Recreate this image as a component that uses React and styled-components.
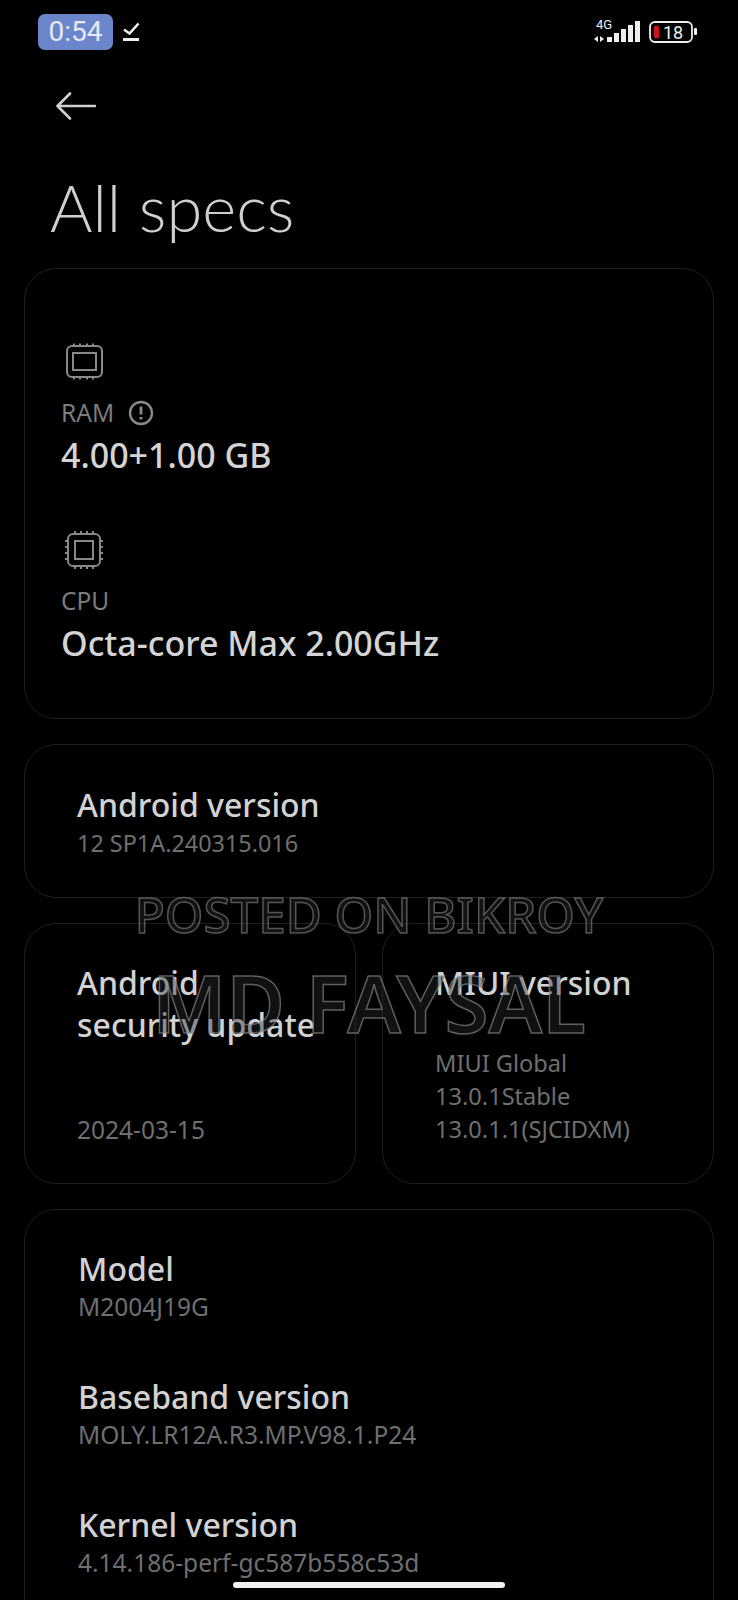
import React from "react";
import styled, { createGlobalStyle } from "styled-components";

const Global = createGlobalStyle`
  html, body { margin: 0; background: #000; }
  body { font-family: "Noto Sans", "Liberation Sans", sans-serif; }
`;

const Screen = styled.div`
  position: relative;
  width: 738px;
  height: 1600px;
  overflow: hidden;
  background: #000;
  color: #dcdcdc;
`;

const StatusBar = styled.div`
  display: flex;
  align-items: center;
  justify-content: space-between;
  height: 36px;
  padding: 14px 40px 0 38px;
`;

const StatusLeft = styled.div`
  display: flex;
  align-items: center;
  gap: 9px;
`;

const Clock = styled.div`
  width: 75px;
  height: 36px;
  border-radius: 7px;
  background: #6b86cb;
  color: #e6eaf5;
  font-family: Roboto, sans-serif;
  font-size: 28px;
  line-height: 36px;
  text-align: center;
`;

const StatusRight = styled.div`
  display: flex;
  align-items: center;
  gap: 9px;
`;

const BackRow = styled.div`
  height: 40px;
  margin-top: 36px;
  padding-left: 56px;
  display: flex;
  align-items: center;
`;

const Title = styled.h1`
  margin: 45px 0 0 50px;
  height: 73px;
  font-family: Lato, sans-serif;
  font-weight: 300;
  font-size: 65px;
  line-height: 73px;
  color: #cfcfcf;
`;

const Content = styled.div`
  display: flex;
  flex-direction: column;
  gap: 25px;
  margin-top: 24px;
  padding: 0 24px;
`;

const Card = styled.section`
  box-sizing: border-box;
  border: 1px solid #1f1f1f;
  border-radius: 32px;
  height: ${(p) => p.$height}px;
  padding: ${(p) => p.$padding || "0"};
`;

const Pair = styled.div`
  display: grid;
  grid-template-columns: 332px 332px;
  gap: 26px;
`;

const SpecIcon = styled.svg`
  display: block;
  width: 40px;
  height: 40px;
  margin-left: 39px;
`;

const SpecLabel = styled.div`
  display: flex;
  align-items: center;
  gap: 14px;
  margin: 16px 0 0 36px;
  height: 30px;
  font-size: 24.5px;
  line-height: 30px;
  color: #7c7c7c;
`;

const SpecValue = styled.div`
  margin: 5px 0 0 36px;
  font-size: 34px;
  line-height: 44px;
  font-weight: 500;
  color: #d4d4d4;
`;

const Spec = styled.div`
  margin-bottom: ${(p) => p.$gap}px;
`;

const Name = styled.div`
  font-size: 32px;
  line-height: 42px;
  font-weight: 500;
  color: #d2d2d2;
`;

const Detail = styled.div`
  margin-top: ${(p) => p.$top || 0}px;
  font-size: ${(p) => p.$size || 24.5}px;
  line-height: 33px;
  color: #6f6f6f;
`;

const Item = styled.div`
  margin-bottom: 53px;
`;

const Watermark = styled.div`
  position: absolute;
  left: 0;
  width: 738px;
  top: ${(p) => p.$top}px;
  text-align: center;
  font-family: "Noto Sans", sans-serif;
  font-size: ${(p) => p.$size}px;
  font-weight: ${(p) => p.$weight};
  line-height: 1;
  white-space: nowrap;
  color: rgba(40, 42, 48, 0.4);
  -webkit-text-stroke: 1.5px ${(p) => p.$stroke};
  pointer-events: none;
`;

const HomeBar = styled.div`
  position: absolute;
  left: 233px;
  bottom: 12px;
  width: 272px;
  height: 6px;
  border-radius: 3px;
  background: #f2f2f2;
`;

const TaskIcon = () => (
  <svg width="20" height="24" viewBox="0 0 20 24" fill="none" stroke="#eee">
    <path d="M2 9.5 L7.5 13.5 L16.5 3.5" strokeWidth="2.6" />
    <path d="M1 19.5 H17" strokeWidth="3" />
  </svg>
);

const Signal = () => (
  <svg width="46" height="32" viewBox="0 0 46 32" fill="#eee">
    <text x="2" y="13" fontFamily="Roboto, sans-serif" fontSize="13" fill="#eee">4G</text>
    <path d="M0 23 l4 -3 v6z M6 20 l4 3 l-4 3z" />
    <rect x="13" y="21" width="5" height="5" />
    <rect x="20" y="17" width="5" height="9" />
    <rect x="27" y="13" width="5" height="13" />
    <rect x="34" y="9" width="5" height="17" />
    <rect x="41" y="5" width="5" height="21" />
  </svg>
);

const Battery = () => (
  <svg width="49" height="22" viewBox="0 0 49 22">
    <rect x="1" y="1" width="42" height="20" rx="5" fill="none" stroke="#eee" strokeWidth="1.8" />
    <rect x="5" y="4.5" width="5" height="13" rx="2" fill="#d0111b" />
    <text x="14" y="17.5" fontFamily="Roboto, sans-serif" fontSize="18" fill="#eee">18</text>
    <rect x="45" y="7" width="3" height="7" rx="1" fill="#eee" />
  </svg>
);

const BackArrow = () => (
  <svg width="40" height="30" viewBox="0 0 40 30" fill="none" stroke="#d0d0d0" strokeWidth="2.6" strokeLinecap="round" strokeLinejoin="round">
    <path d="M1.5 15 H39 M14 2.5 L1.5 15 L14 27.5" />
  </svg>
);

const Info = () => (
  <svg width="26" height="26" viewBox="0 0 26 26" fill="none" stroke="#8a8a8a" strokeWidth="2.4">
    <circle cx="13" cy="13" r="11" />
    <path d="M13 6.5 V14.5 M13 17 V19.5" strokeWidth="2.8" />
  </svg>
);

const RamIcon = () => (
  <SpecIcon viewBox="0 0 40 40" fill="none" stroke="#8a8a8a" strokeWidth="2">
    <rect x="3" y="4" width="35" height="31" rx="5" />
    <rect x="9" y="11" width="23" height="17" />
    {[10, 16, 23, 29].map((x) => (
      <path key={x} d={`M${x} 1.5 V4 M${x} 35 V37.5`} />
    ))}
  </SpecIcon>
);

const CpuIcon = () => (
  <SpecIcon viewBox="0 0 40 40" fill="none" stroke="#8a8a8a" strokeWidth="2">
    <rect x="4" y="4" width="32" height="32" rx="5" />
    <rect x="11" y="11" width="18" height="18" />
    {[11, 17, 23, 29].map((x) => (
      <path key={x} d={`M${x} 1 V4 M${x} 36 V39 M1 ${x} H4 M36 ${x} H39`} />
    ))}
  </SpecIcon>
);

const App = () => (
  <Screen>
    <Global />
    <StatusBar>
      <StatusLeft>
        <Clock>0:54</Clock>
        <TaskIcon />
      </StatusLeft>
      <StatusRight>
        <Signal />
        <Battery />
      </StatusRight>
    </StatusBar>
    <BackRow>
      <BackArrow />
    </BackRow>
    <Title>All specs</Title>
    <Content>
      <Card $height={451} $padding="73px 0 0">
        <Spec $gap={53}>
          <RamIcon />
          <SpecLabel>
            RAM <Info />
          </SpecLabel>
          <SpecValue>4.00+1.00 GB</SpecValue>
        </Spec>
        <Spec $gap={0}>
          <CpuIcon />
          <SpecLabel>CPU</SpecLabel>
          <SpecValue>Octa-core Max 2.00GHz</SpecValue>
        </Spec>
      </Card>
      <Card $height={154} $padding="39px 0 0 52px">
        <Name>Android version</Name>
        <Detail $size={23.4} $top={1}>12 SP1A.240315.016</Detail>
      </Card>
      <Pair>
        <Card $height={261} $padding="38px 0 0 52px">
          <Name>
            Android
            <br />
            security update
          </Name>
          <Detail $top={67}>2024-03-15</Detail>
        </Card>
        <Card $height={261} $padding="38px 0 0 52px">
          <Name>MIUI version</Name>
          <Detail $size={23.6} $top={43}>
            MIUI Global
            <br />
            13.0.1Stable
            <br />
            13.0.1.1(SJCIDXM)
          </Detail>
        </Card>
      </Pair>
      <Card $height={460} $padding="38px 0 0 53px">
        <Item>
          <Name>Model</Name>
          <Detail>M2004J19G</Detail>
        </Item>
        <Item>
          <Name>Baseband version</Name>
          <Detail>MOLY.LR12A.R3.MP.V98.1.P24</Detail>
        </Item>
        <Item>
          <Name>Kernel version</Name>
          <Detail>4.14.186-perf-gc587b558c53d</Detail>
        </Item>
      </Card>
    </Content>
    <Watermark $top={889} $size={49.3} $weight={500} $stroke="rgba(135,135,135,0.6)">POSTED ON BIKROY</Watermark>
    <Watermark $top={962} $size={80} $weight={600} $stroke="rgba(140,140,140,0.65)">MD FAYSAL</Watermark>
    <HomeBar />
  </Screen>
);

export default App;
